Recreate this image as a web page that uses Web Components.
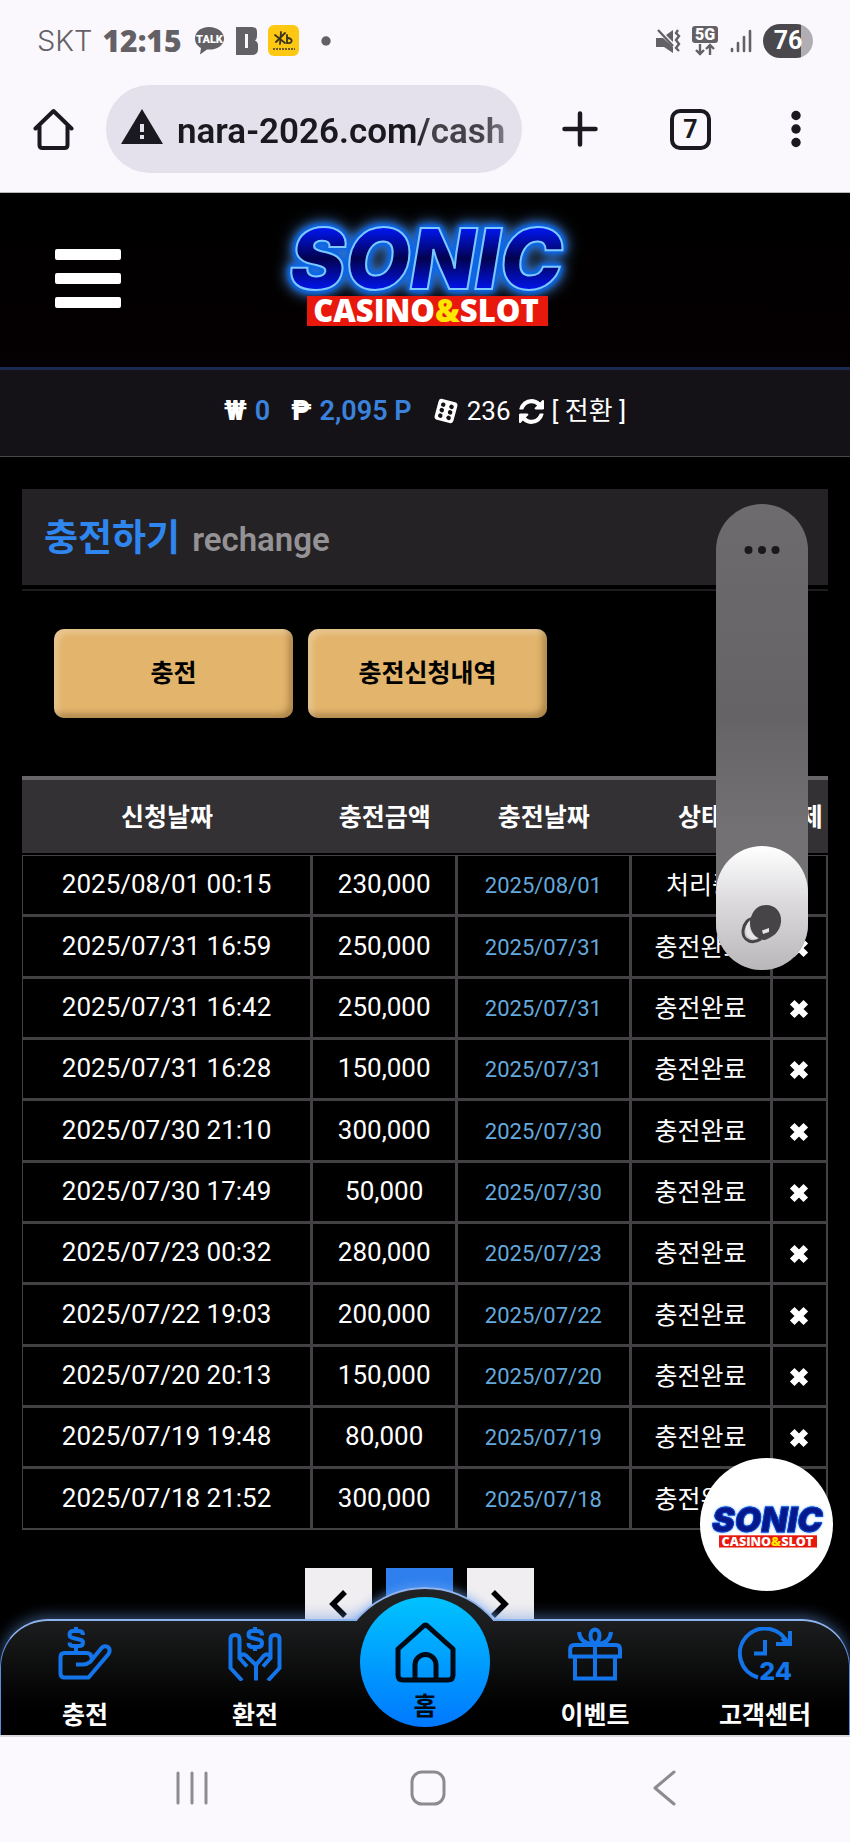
<!DOCTYPE html>
<html lang="ko">
<head>
<meta charset="utf-8">
<meta name="viewport" content="width=device-width, initial-scale=1">
<title>충전하기</title>
<style>
  html, body { margin: 0; background: #000; }
  body { font-family: Roboto, "Noto Sans CJK KR", sans-serif; color: #fff; }
</style>
</head>
<body>
<phone-screen>
  <phone-status slot="top"></phone-status>
  <browser-bar slot="top" url="nara-2026.com/cash" tabs="7"></browser-bar>

  <site-header></site-header>
  <balance-bar></balance-bar>
  <site-main>
    <page-title>충전하기<span slot="sub">rechange</span></page-title>
    <button-row>
      <gold-button>충전</gold-button>
      <gold-button>충전신청내역</gold-button>
    </button-row>
    <history-table></history-table>
    <page-nav></page-nav>
  </site-main>

  <edge-handle slot="over"></edge-handle>
  <chat-badge slot="over"></chat-badge>
  <bottom-nav slot="over">
    <nav-item icon="deposit">충전</nav-item>
    <nav-item icon="withdraw">환전</nav-item>
    <nav-home>홈</nav-home>
    <nav-item icon="gift">이벤트</nav-item>
    <nav-item icon="support">고객센터</nav-item>
  </bottom-nav>

  <system-nav slot="bottom"></system-nav>
</phone-screen>

<script>
const define = (name, html, setup) => {
  const template = document.createElement('template');
  template.innerHTML = html;
  customElements.define(name, class extends HTMLElement {
    constructor() {
      super();
      this.attachShadow({ mode: 'open' }).append(template.content.cloneNode(true));
    }
    connectedCallback() { if (setup) setup(this.shadowRoot, this); }
  });
};

/* ---------- page frame ---------- */
define('phone-screen', `
  <style>
    :host { display: flex; flex-direction: column; min-height: 100vh; }
    .site { flex: 1 0 auto; position: relative; overflow: hidden; background: #000; }
    ::slotted(*) { flex-shrink: 0; }
  </style>
  <slot name="top"></slot>
  <div class="site"><slot></slot><slot name="over"></slot></div>
  <slot name="bottom"></slot>`);

define('site-main', `
  <style>:host { display: block; padding: 32px 22px 80px; }</style>
  <slot></slot>`);

/* ---------- phone status bar ---------- */
define('phone-status', `
  <style>
    :host { display: flex; align-items: center; justify-content: space-between; height: 81px;
      padding: 0 37px 4px 37px; background: #fbf8fd; color: #636165; }
    .group { display: flex; align-items: center; gap: 10px; }
    .carrier { font: 300 29px/36px Inter, sans-serif; }
    .time { font: 900 30px/36px "Open Sans", sans-serif; }
    svg { display: block; }
    .battery { width: 50px; height: 34px; border-radius: 17px; text-align: center;
      font: 700 25px/34px Roboto, sans-serif; color: #fff;
      background: linear-gradient(90deg, #4a484c 76%, #b0aeb3 76%); }
  </style>
  <div class="group">
    <span class="carrier">SKT</span>
    <span class="time">12:15</span>
    <svg width="34" height="32" viewBox="0 0 34 32" role="img" aria-label="TALK">
      <path fill="#636165" d="M17 2C8.500 2 3 7 3 13.500c0 4.500 2.500 7.500 6 9.500l-1 6.500 7-5c10 .8 17-4 17-11C32 7 25.500 2 17 2z"/>
      <text x="17.500" y="18" text-anchor="middle" font-family="Roboto" font-weight="900" font-size="11" fill="#fff">TALK</text>
    </svg>
    <svg width="22" height="28" viewBox="0 0 22 28" aria-hidden="true">
      <path fill="#636165" d="M0 0H16Q21 0 21 5V9Q21 12 19 13.500Q22 15 22 18V22Q22 28 16 28H0Z"/>
      <path fill="#fbf8fd" d="M9 7h3v14H9z"/>
    </svg>
    <svg width="31" height="31" viewBox="0 0 31 31" aria-hidden="true">
      <rect width="31" height="31" rx="6" fill="#fcc812"/>
      <path fill="none" stroke="#3b3420" stroke-width="1.800" stroke-linecap="round" d="M13 7l-1 12M7 10l10 8M17 8L8 17M19 10v8c5 1 7-4 1-5"/>
      <path stroke="#6a5a20" stroke-width="2" stroke-dasharray="2 1" d="M5 24h22"/>
    </svg>
    <svg width="28" height="10" viewBox="0 0 28 10" aria-hidden="true"><circle cx="17" cy="5" r="4.700" fill="#636165"/></svg>
  </div>
  <div class="group">
    <svg width="26" height="26" viewBox="0 0 26 26" aria-hidden="true">
      <path fill="#636165" d="M1 10h7l10 9v6l-9-6H1zM18 2v12l-7-7z"/>
      <path fill="none" stroke="#636165" stroke-width="2.400" d="M3 2l15 16M23 2l-2 3 3 3-3 4 3 4-3 4 3 3"/>
    </svg>
    <svg width="28" height="32" viewBox="0 0 28 32" role="img" aria-label="5G">
      <rect x="1" y="1" width="26" height="17" rx="3" fill="#636165"/>
      <text x="14" y="15" text-anchor="middle" font-family="Roboto" font-weight="900" font-size="16" fill="#fff">5G</text>
      <path fill="none" stroke="#636165" stroke-width="2.400" d="M9 19v10M5 25l4 4 4-4M19 30V20M15 24l4-4 4 4"/>
    </svg>
    <svg width="24" height="24" viewBox="0 0 24 24" aria-hidden="true">
      <path fill="none" stroke="#636165" stroke-width="2.600" stroke-linecap="round" d="M3 20v2M9 14v8M15 8v14M21 2v20"/>
    </svg>
    <span class="battery">76</span>
  </div>`);

/* ---------- browser toolbar ---------- */
define('browser-bar', `
  <style>
    :host { display: flex; align-items: center; padding: 0 49px 19px 33px; background: #fbf8fd;
      border-bottom: 1px solid #b9b7bb; }
    button { flex: none; margin: 0; padding: 0; border: 0; background: none; color: #1b1920; cursor: pointer; }
    svg { display: block; }
    .pill { flex: 1; min-width: 0; display: flex; align-items: center; gap: 14px; height: 88px;
      margin: 0 40px 0 32px; padding: 0 17px 0 15px; border-radius: 44px; background: #e4e1ec; box-sizing: border-box; }
    .pill svg { flex: none; }
    input { flex: 1; min-width: 0; height: 60px; margin: 0; padding: 4px 0 0; border: 0; outline: 0; background: none;
      font: 600 35px/56px Roboto, sans-serif; color: #1b1920; box-sizing: border-box;
      -webkit-mask-image: linear-gradient(90deg, #000 73%, rgba(0,0,0,.8) 77%, rgba(0,0,0,.8) 93%, rgba(0,0,0,.5)); }
    .tabs { width: 41px; height: 41px; margin: 0 80px 0 72px; border: 4px solid #1b1920; border-radius: 10px;
      font: 700 25px/33px Roboto, sans-serif; text-align: center; box-sizing: border-box; }
  </style>
  <button aria-label="Home">
    <svg width="41" height="42" viewBox="0 0 41 42"><path fill="none" stroke="#1b1920" stroke-width="4" stroke-linecap="round" stroke-linejoin="round" d="M2.500 20.500L20.500 3l18 17.500M6.500 17V37q0 3 3 3h22q3 0 3-3V17"/></svg>
  </button>
  <label class="pill">
    <svg width="42" height="42" viewBox="0 0 42 42" role="img" aria-label="Not secure"><path fill="#1b1920" d="M21 1L42 36H0z"/><path fill="#e4e1ec" d="M19 16h4v8h-4zM19 27h4v4h-4z"/></svg>
    <input type="text" aria-label="Address">
  </label>
  <button aria-label="New tab">
    <svg width="36" height="36" viewBox="0 0 36 36"><path stroke="#1b1920" stroke-width="4.500" stroke-linecap="round" d="M18 2.500v31M2.500 18h31"/></svg>
  </button>
  <button class="tabs" aria-label="Tabs"></button>
  <button aria-label="Menu">
    <svg width="10" height="38" viewBox="0 0 10 38"><g fill="#1b1920"><circle cx="5" cy="5.500" r="4.700"/><circle cx="5" cy="19" r="4.700"/><circle cx="5" cy="32.500" r="4.700"/></g></svg>
  </button>`,
  (root, host) => {
    root.querySelector('input').value = host.getAttribute('url');
    root.querySelector('.tabs').textContent = host.getAttribute('tabs');
  });

/* ---------- brand ---------- */
define('brand-logo', `
  <style>
    :host { display: block; width: 300px; }
    svg { display: block; width: 100%; overflow: visible; }
    .name { font: italic 900 84px Inter, sans-serif; fill: url(#core); stroke: #7cc8ff; stroke-width: 2;
      filter: drop-shadow(0 0 2px #0a6cf0) drop-shadow(0 0 2px #0a5fe0) drop-shadow(0 0 3px #0a5fe0) drop-shadow(0 0 7px #4a8ad8); }
    .band { font: 800 31px "Open Sans", sans-serif; fill: #fff; }
    :host([light]) .name { fill: #06188c; stroke: #0b49c8; filter: drop-shadow(0 0 1px #1c62e6) drop-shadow(0 0 2px #6ba6ff); }
  </style>
  <svg viewBox="0 0 300 108" role="img" aria-label="SONIC CASINO&amp;SLOT">
    <defs>
      <linearGradient id="core" x1="0" y1="0" x2="0" y2="1">
        <stop offset=".2" stop-color="#0016f0"/><stop offset=".5" stop-color="#020250"/><stop offset=".8" stop-color="#0014e8"/>
      </linearGradient>
    </defs>
    <text class="name" x="151" y="70" text-anchor="middle">SONIC</text>
    <rect x="32" y="77" width="241" height="30" fill="#e8180c"/>
    <text class="band" x="151" y="103" text-anchor="middle">CASINO<tspan fill="#ffe600">&amp;</tspan>SLOT</text>
  </svg>`);

define('site-header', `
  <style>
    :host { display: grid; grid-template-columns: 1fr 300px 1fr; height: 174px; background: linear-gradient(#000, #050001); border-bottom: 3px solid #1b2a50; }
    button { display: flex; flex-direction: column; gap: 13px; width: 66px; margin: 56px 0 0 55px; padding: 0; border: 0; background: none; align-self: start; }
    i { display: block; width: 66px; height: 11px; border-radius: 2px; background: #fff; }
    a { display: block; padding-top: 26px; }
  </style>
  <button aria-label="메뉴"><i></i><i></i><i></i></button>
  <a href="#"><brand-logo></brand-logo></a>`);

define('balance-bar', `
  <style>
    :host { display: flex; justify-content: center; align-items: center; gap: 21px; height: 82px; padding-bottom: 4px; background: #141216;
      border-bottom: 1px solid #4a484c; font: 400 26px/32px Roboto, "Noto Sans CJK KR", sans-serif; }
    span, a { display: flex; align-items: center; gap: 8px; color: #fff; text-decoration: none; }
    b { font-weight: 900; font-size: 27px; }
    em { font-style: normal; font-weight: 600; font-size: 27px; color: #3b82dd; }
  </style>
  <span><b>₩</b><em>0</em></span>
  <span><b>₱</b><em>2,095 P</em></span>
  <a href="#">
    <svg width="26" height="28" viewBox="1 0 22 26" aria-hidden="true">
      <g transform="rotate(15 12 13)"><rect x="3" y="3" width="18" height="20" rx="3" fill="#fff"/>
      <g fill="#141216"><circle cx="8" cy="8" r="2.100"/><circle cx="8" cy="13.200" r="2.100"/><circle cx="8" cy="18.500" r="2.100"/><circle cx="16" cy="8" r="2.100"/><circle cx="16" cy="13.200" r="2.100"/><circle cx="16" cy="18.500" r="2.100"/></g></g>
    </svg>
    236
    <svg width="25" height="25" viewBox="0 0 1536 1536" aria-hidden="true"><path fill="#fff" d="M1511 928q0 5-1 7-64 268-268 434.500T764 1536q-146 0-282.500-55T238 1324l-129 129q-19 19-45 19t-45-19-19-45V960q0-26 19-45t45-19h448q26 0 45 19t19 45-19 45l-137 137q71 66 161 102t187 36q134 0 250-65t186-179q11-17 53-117 8-23 30-23h192q13 0 22.500 9.500t9.500 22.500zm25-800v448q0 26-19 45t-45 19h-448q-26 0-45-19t-19-45 19-45l138-138Q969 256 768 256q-134 0-250 65T332 500q-11 17-53 117-8 23-30 23H50q-13 0-22.500-9.500T18 608v-7q65-268 270-434.500T768 0q146 0 284 55.500T1297 212l130-129q19-19 45-19t45 19 19 45z"/></svg>
    <span>[ 전환 ]</span>
  </a>`);

/* ---------- page content ---------- */
define('page-title', `
  <style>
    :host { display: block; padding-bottom: 4px; border-bottom: 2px solid #1d1b1d; }
    h1 { display: flex; align-items: baseline; gap: 12px; height: 96px; margin: 0; padding: 0 22px; background: #242224;
      font: 700 37px/100px Roboto, "Noto Sans CJK KR", sans-serif; color: #2f86ee; }
    small { font-size: 33px; font-weight: 600; color: #949295; }
  </style>
  <h1><span><slot></slot></span><small><slot name="sub"></slot></small></h1>`);

define('button-row', `
  <style>:host { display: flex; gap: 15px; padding: 38px 32px 58px; }</style>
  <slot></slot>`);

define('gold-button', `
  <style>
    :host { display: block; width: 239px; }
    button { width: 100%; height: 89px; margin: 0; padding: 0; border: 0; border-radius: 10px; background: #e2b46c; color: #000;
      font: 700 25px/36px Roboto, "Noto Sans CJK KR", sans-serif; cursor: pointer;
      box-shadow: inset 4px 4px 6px rgba(255,255,255,.28), inset -4px -4px 6px rgba(90,60,20,.4); }
  </style>
  <button><slot></slot></button>`);

const history = [
  ['2025/08/01 00:15', '230,000', '2025/08/01', '처리중'],
  ['2025/07/31 16:59', '250,000', '2025/07/31', '충전완료'],
  ['2025/07/31 16:42', '250,000', '2025/07/31', '충전완료'],
  ['2025/07/31 16:28', '150,000', '2025/07/31', '충전완료'],
  ['2025/07/30 21:10', '300,000', '2025/07/30', '충전완료'],
  ['2025/07/30 17:49', '50,000', '2025/07/30', '충전완료'],
  ['2025/07/23 00:32', '280,000', '2025/07/23', '충전완료'],
  ['2025/07/22 19:03', '200,000', '2025/07/22', '충전완료'],
  ['2025/07/20 20:13', '150,000', '2025/07/20', '충전완료'],
  ['2025/07/19 19:48', '80,000', '2025/07/19', '충전완료'],
  ['2025/07/18 21:52', '300,000', '2025/07/18', '충전완료'],
];

define('history-table', `
  <style>
    :host { display: block; }
    table { width: 100%; table-layout: fixed; border-collapse: separate; border-spacing: 0; text-align: center; }
    th { height: 79px; padding: 0 0 4px; background: #343134; border-top: 4px solid #676567; border-bottom: 2px solid #000;
      font: 700 25px/36px "Noto Sans CJK KR", sans-serif; box-sizing: border-box; white-space: nowrap; }
    td { height: 61px; padding: 0 0 2px; box-sizing: border-box; border: solid #434144; border-width: 1px 2px 2px 1px; font-size: 26px; line-height: 36px; white-space: nowrap; }
    tr:nth-child(3n+2) td { height: 62px; }
    .day { padding: 2px 0 0; font-size: 22px; color: #64a9dc; }
    .state, .del { padding: 2px 0 0; font-size: 25px; }
    button { display: block; margin: 0 auto; padding: 0; border: 0; background: none; cursor: pointer; }
    svg { display: block; }
    .c1 { width: 36%; } .c2 { width: 18%; } .c3 { width: 21.5%; } .c4 { width: 17.5%; } .c5 { width: 7%; }
  </style>
  <table>
    <colgroup><col class="c1"><col class="c2"><col class="c3"><col class="c4"><col class="c5"></colgroup>
    <thead><tr><th>신청날짜</th><th>충전금액</th><th>충전날짜</th><th>상태</th><th>삭제</th></tr></thead>
    <tbody></tbody>
  </table>`,
  root => {
    root.querySelector('tbody').innerHTML = history.map(([at, amount, day, state]) => `
      <tr><td>${at}</td><td>${amount}</td><td class="day">${day}</td><td class="state">${state}</td>
      <td class="del"><button aria-label="삭제"><svg width="20" height="20" viewBox="0 0 20 20"><path stroke="#fff" stroke-width="6.500" stroke-linecap="square" d="M5.500 5.500l9 9M14.500 5.500l-9 9"/></svg></button></td></tr>`).join('');
  });

define('page-nav', `
  <style>
    :host { display: block; padding: 38px 12px 0 0; }
    nav { display: flex; justify-content: center; gap: 14px; }
    a { display: flex; align-items: center; justify-content: center; width: 67px; height: 72px; background: #f0eef0; }
    .on { background: #2f80ee; }
  </style>
  <nav aria-label="페이지">
    <a href="#" aria-label="이전"><svg width="20" height="28" viewBox="0 0 20 28"><path fill="none" stroke="#000" stroke-width="5.500" d="M17 2L5 14l12 12"/></svg></a>
    <a href="#" class="on" aria-label="1" aria-current="page"></a>
    <a href="#" aria-label="다음"><svg width="20" height="28" viewBox="0 0 20 28"><path fill="none" stroke="#000" stroke-width="5.500" d="M3 2l12 12L3 26"/></svg></a>
  </nav>`);

/* ---------- things that float over the page ---------- */
define('edge-handle', `
  <style>
    :host { position: absolute; top: 311px; right: 42px; width: 92px; height: 466px; border-radius: 46px;
      background: linear-gradient(#6d6b6d, #656365 45%, #737173 70%); display: flex; flex-direction: column; justify-content: space-between; }
    button { display: flex; justify-content: center; width: 100%; margin: 0; padding: 0; border: 0; background: none; }
    .more { padding-top: 41px; }
    .thumb { height: 124px; padding-top: 58px; border-radius: 46px; background: linear-gradient(#fff, #dcdadd 45%, #b9b7ba); }
  </style>
  <button class="more" aria-label="더보기"><svg width="36" height="10" viewBox="0 0 36 10"><g fill="#1a181a"><circle cx="4.500" cy="5" r="4"/><circle cx="18" cy="5" r="4"/><circle cx="31.500" cy="5" r="4"/></g></svg></button>
  <button class="thumb" aria-label="핸들"><svg width="42" height="40" viewBox="0 0 42 40">
    <path fill="none" stroke="#464446" stroke-width="3" d="M12 14C0 18-1 34 8 37c4 1.500 8 .5 12-2"/>
    <path fill="#464446" d="M25 1c10 0 16 8 15 17-1 10-8 15-16 18-9 0-15-8-15-17C10 8 16 1 25 1z"/>
    <path fill="#e6e4e6" d="M21 26.500l7-2.500v4l-6 2zM9 16c-2 8 1 14 8 18-8 3-13-2-12-10 .5-3 2-6 4-8z"/>
  </svg></button>`);

define('chat-badge', `
  <style>
    :host { position: absolute; right: 17px; bottom: 144px; }
    a { display: flex; align-items: center; justify-content: center; width: 133px; height: 133px; border-radius: 50%; background: #fff; }
    brand-logo { width: 122px; padding-top: 2px; }
  </style>
  <a href="#"><brand-logo light></brand-logo></a>`);

/* ---------- bottom navigation ---------- */
define('bottom-nav', `
  <style>
    :host { position: absolute; left: 0; right: 0; bottom: 0; height: 116px; }
    .bar { position: absolute; inset: 0; border: 1px solid #5b8ce0; border-top: 2px solid #8db4ee; border-bottom: 0;
      border-radius: 48px 48px 0 0; background: linear-gradient(#1c1d1e, #000 78%); box-shadow: 0 -3px 14px rgba(100,150,225,.5); }
    .arch { position: absolute; left: calc(50% - 91px); top: -32px; width: 182px; height: 182px; box-sizing: border-box;
      border: 2px solid #8db4ee; border-radius: 50%; background: linear-gradient(#222324, #1c1d1e 20%);
      box-shadow: 0 -2px 10px rgba(110,165,245,.6); clip-path: inset(-20px 0 148px); }
    nav { position: relative; display: grid; grid-template-columns: repeat(5, 1fr); }
  </style>
  <div class="bar"></div><div class="arch"></div>
  <nav><slot></slot></nav>`);

const navIcons = {
  deposit: `<path d="M2.500 30Q2.500 26 6.500 26H29Q34 26.500 33.500 32M18 37.500H25Q29 37.500 32 35L43.500 21Q46.500 18 50 20Q53 23 50.500 27L30.500 50.500H6.500Q2.500 50.500 2.500 46.500V30"/>
    <path d="M25 8Q25 4 21 4H15.500Q11.500 4 11.500 7.500Q11.500 10.500 15 11L21 12.500Q25 13 25 15.500Q25 19 21 19H15.500Q11.500 19 11.500 15.500M18 0V4M18 19V26"/>`,
  withdraw: `<path d="M14 53.500L2.500 41V12Q2.500 8 7 8Q11.500 8 11.500 12V31L19 39.500M40 53.500L51.500 41V12Q51.500 8 47 8Q42.500 8 42.500 12V31L35 39.500M28 53.500V38L18 28.500Q15 26 12 29M28 38L36 28.500Q39 26 42 29"/>
    <path d="M34 8.500Q34 4 30 4H24.500Q20.500 4 20.500 7.500Q20.500 10.500 24 11L30 12.500Q34 13 34 16Q34 20 30 20H24.500Q20.500 20 20.500 16M27 0V4M27 20V24"/>`,
  gift: `<path d="M2.200 29.500V22Q2.200 18 6.200 18H48Q52 18 52 22V29.500ZM7 30V51.500H47V30M27 18V51.500M27 17C20 12 22 3 27 2.500C32 3 34 12 27 17ZM11 5Q12 16 24 17M43 5Q42 16 30 17"/>`,
  support: `<path d="M20 50.500A25 25 0 1 1 50 17M52 4V17H38M50 17L44 11M27 13V26.500H16"/>
    <text x="54" y="53" text-anchor="end" font-family="Inter" font-weight="800" font-size="25" fill="#1474ea" stroke="none">24</text>`,
};

define('nav-item', `
  <style>
    :host { display: block; }
    a { display: flex; flex-direction: column; align-items: center; gap: 14px; padding-top: 8px; color: #fff; text-decoration: none;
      font: 700 25px/36px "Noto Sans CJK KR", sans-serif; white-space: nowrap; }
    svg { display: block; fill: none; stroke: #1474ea; stroke-width: 4; }
  </style>
  <a href="#"><svg width="54" height="54" viewBox="0 0 54 54" aria-hidden="true"></svg><slot></slot></a>`,
  (root, host) => { root.querySelector('svg').innerHTML = navIcons[host.getAttribute('icon')]; });

define('nav-home', `
  <style>
    :host { display: flex; justify-content: center; }
    a { display: flex; flex-direction: column; align-items: center; gap: 3px; width: 130px; height: 130px; margin-top: -22px; padding-top: 25px;
      box-sizing: border-box; border-radius: 50%; background: linear-gradient(#00c3ff, #0078ff); color: #000a14; text-decoration: none;
      font: 700 25px/36px "Noto Sans CJK KR", sans-serif; }
    svg { display: block; flex: none; }
  </style>
  <a href="#"><svg width="61" height="61" viewBox="0 0 61 61" aria-hidden="true"><path fill="none" stroke="#000a14" stroke-width="5" stroke-linejoin="round" d="M3 27L28 4.500Q30.500 2 33 4.500L58 27V53Q58 58 53 58H8Q3 58 3 53ZM20 58V43a10.500 10.500 0 0 1 21 0V58"/></svg><slot></slot></a>`);

/* ---------- phone system buttons ---------- */
define('system-nav', `
  <style>
    :host { display: grid; grid-template-columns: repeat(3, 28%); justify-content: center; justify-items: center; align-items: center;
      height: 107px; padding: 0 0 4px 6px; background: #fbf9fe; border-top: 2px solid #d9d7db; box-sizing: border-box; }
    button { margin: 0; padding: 0; border: 0; background: none; }
    svg { display: block; fill: none; stroke: #8d8b90; stroke-width: 3; stroke-linecap: round; stroke-linejoin: round; }
  </style>
  <button aria-label="최근 앱"><svg width="34" height="36" viewBox="0 0 34 36"><path d="M3 3v30M17 3v30M31 3v30"/></svg></button>
  <button aria-label="홈"><svg width="36" height="36" viewBox="0 0 36 36"><rect x="2" y="2" width="32" height="32" rx="10"/></svg></button>
  <button aria-label="뒤로"><svg width="24" height="38" viewBox="0 0 24 38"><path d="M22 3L3 19l19 16"/></svg></button>`);
</script>
</body>
</html>
